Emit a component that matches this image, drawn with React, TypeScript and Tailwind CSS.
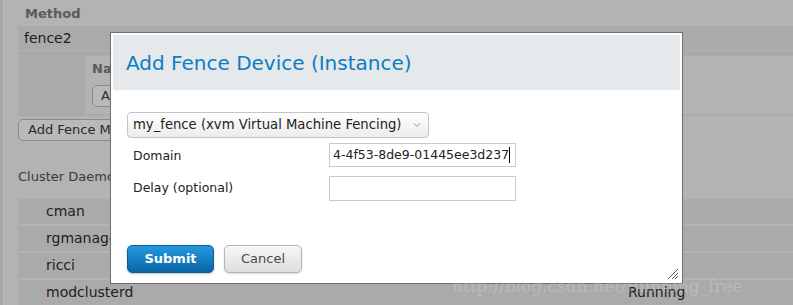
import { ChevronDown } from "lucide-react";

const daemons = [
  { name: "cman", status: "" },
  { name: "rgmanager", status: "" },
  { name: "ricci", status: "" },
  { name: "modclusterd", status: "Running" },
];

function Backdrop() {
  return (
    <div className="flex h-[305px] w-[793px] overflow-hidden bg-[#b3b3b3] text-[#1e1e1e]">
      {/* left rail */}
      <div className="w-[4px] shrink-0 border-r border-[#bdbdbd] bg-[#a7a7a7]" />

      <div className="flex flex-1 flex-col pl-[14px]">
        <div className="flex h-[27px] items-center pl-[7px] pt-[2px] font-bold text-[#5a5a5a]">Method</div>
        <div className="flex h-[25px] items-center bg-[#aaaaaa] pl-[6px] text-[14px]">fence2</div>

        <div className="mt-[1px] h-[67px] bg-[#aaaaaa] pl-[67px] pt-[5px]">
          <div className="h-[58px] bg-[#b3b3b3] pl-[7px] pt-[3px]">
            <div className="font-bold text-[#5a5a5a]">Name</div>
            <button className="mt-[6px] h-[22px] rounded-[5px] border border-[#8a8a8a] bg-[#b9b9b9] px-[8px] text-[#2a2a2a]">
              Add
            </button>
          </div>
        </div>

        <div className="mt-[3px]">
          <button className="h-[22px] rounded-[5px] border border-[#8a8a8a] bg-[#b9b9b9] px-[9px] text-[#2a2a2a]">
            Add Fence Method
          </button>
        </div>

        <div className="mt-[28px] h-[16px] leading-[16px] text-[#3a3a3a]">Cluster Daemons</div>

        <div className="mt-[14px] flex flex-col gap-[2px]">
          {daemons.map((d) => (
            <div key={d.name} className="flex h-[25px] items-center bg-[#aaaaaa] pl-[28px] text-[14px]">
              <span className="flex-1">{d.name}</span>
              <span className="w-[165px]">{d.status}</span>
            </div>
          ))}
        </div>
      </div>
    </div>
  );
}

function ResizeGrip() {
  return (
    <svg width="12" height="12" viewBox="0 0 12 12" className="absolute bottom-[3px] right-[3px]">
      <path d="M11 1 L1 11 M11 5 L5 11 M11 8 L8 11" stroke="#555" strokeWidth="1" />
    </svg>
  );
}

function Dialog() {
  return (
    <div className="absolute left-[110px] top-[32px] flex h-[252px] w-[573px] flex-col border border-[#6e6e6e] bg-white p-[2px]">
      <div className="flex h-[55px] items-center bg-[#e5e9ec] pl-[13px] text-[20px] text-[#0b7ec3]">
        Add Fence Device (Instance)
      </div>

      <div className="flex flex-1 flex-col pl-[14px] pt-[22px]">
        <div className="flex h-[26px] w-[302px] items-center justify-between rounded-[4px] border border-[#c4c4c4] bg-gradient-to-b from-white to-[#ececec] pl-[5px] pr-[5px] text-[13.2px] text-[#222]">
          <span className="whitespace-nowrap">my_fence (xvm Virtual Machine Fencing)</span>
          <ChevronDown className="h-[12px] w-[12px] shrink-0 text-[#9a9a9a]" strokeWidth={2} />
        </div>

        <div className="mt-[5px] flex h-[24px] items-center text-[12.5px] text-[#222]">
          <span className="w-[202px] pl-[6px] pt-[2px]">Domain</span>
          <div className="flex h-[24px] w-[187px] items-center overflow-hidden whitespace-nowrap border border-[#c9c9c9] pl-[3px]">
            <span>4-4f53-8de9-01445ee3d237</span>
            <span className="h-[16px] w-[1px] shrink-0 bg-black" />
          </div>
        </div>

        <div className="mt-[9px] flex h-[25px] items-center text-[12.5px] text-[#222]">
          <span className="w-[202px] pl-[6px]">Delay (optional)</span>
          <div className="h-[25px] w-[187px] border border-[#c9c9c9]" />
        </div>

        <div className="mt-[44px] flex gap-[10px]">
          <button className="h-[28px] w-[87px] rounded-[5px] border border-[#0a5f98] bg-gradient-to-b from-[#2299e0] to-[#0b66a8] font-bold text-white shadow-[0_1px_2px_rgba(0,0,0,0.25)]">
            Submit
          </button>
          <button className="h-[28px] w-[78px] rounded-[5px] border border-[#b3b3b3] bg-gradient-to-b from-[#f7f7f7] to-[#dedede] text-[#4a4a4a] shadow-[0_1px_2px_rgba(0,0,0,0.15)]">
            Cancel
          </button>
        </div>
      </div>

      <ResizeGrip />
    </div>
  );
}

export default function App() {
  return (
    <div className="relative h-[305px] w-[793px] overflow-hidden font-['DejaVu_Sans',sans-serif] text-[13px]">
      <Backdrop />
      <Dialog />
      {/* watermark */}
      <div className="pointer-events-none absolute left-[452px] top-[274px] whitespace-nowrap font-['DejaVu_Serif',serif] text-[17px] text-white/20">
        http://blog.csdn.net/Running_free
      </div>
    </div>
  );
}
